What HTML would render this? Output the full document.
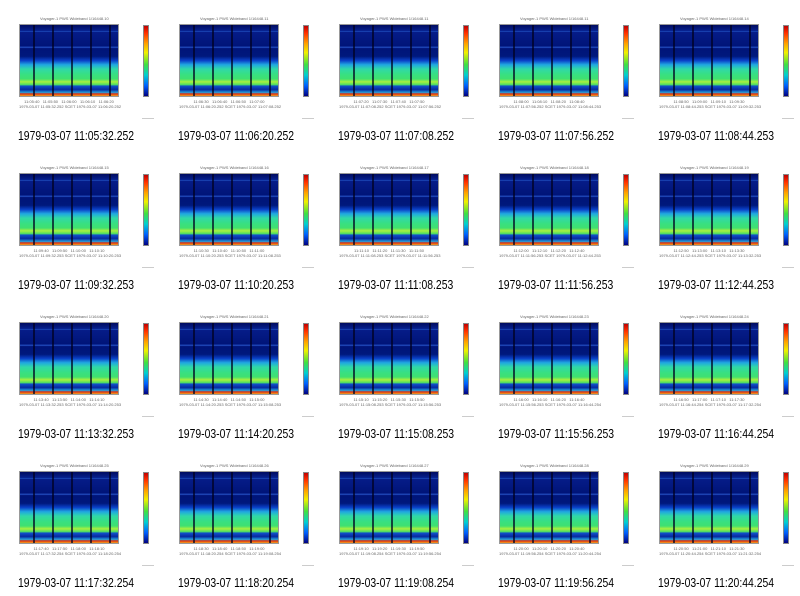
<!DOCTYPE html>
<html><head><meta charset="utf-8"><style>
*{margin:0;padding:0;box-sizing:border-box}
body{width:800px;height:596px;background:#fff;position:relative;overflow:hidden;font-family:"Liberation Sans",sans-serif}
.c{position:absolute;width:160px;height:149px}
.t{position:absolute;left:40px;top:16px;font-size:4px;color:#666;white-space:nowrap}
.p{position:absolute;left:19px;top:24px;width:100px;height:73px;border:1px solid #999;
background:
repeating-linear-gradient(90deg,transparent 0 13px,rgba(0,0,30,.7) 13px 15px,transparent 15px 19px),
linear-gradient(180deg,#000c60 0%,#06208e 8%,#2050c0 9%,#061c88 10%,#001478 30%,#2a5ad0 31%,#001478 33%,#00187c 44%,#0a40c8 50%,#20a8e0 56%,#30d8a8 62%,#38e080 70%,#40e070 76%,#a8f040 80%,#50e060 84%,#1050c8 86%,#0828a0 91%,#20a0e0 95%,#e03010 97%,#f0a020 100%)}
.cb{position:absolute;left:143px;top:25px;width:6px;height:72px;border:1px solid #888;background:linear-gradient(180deg,#c00000,#ff3000 10%,#ffa000 25%,#f0f000 38%,#40e040 55%,#00d0d0 70%,#0060ff 85%,#000080)}
.x1,.x2{position:absolute;left:19px;font-size:4px;color:#666;white-space:nowrap;width:100px;text-align:center}
.x1{top:99px}.x2{top:104px}
.cp{position:absolute;left:18px;top:128px;font-size:13px;color:#000;white-space:nowrap;transform:scaleX(.8);transform-origin:left top}
.r{position:absolute;left:142px;top:118px;width:12px;height:1px;background:#ccc}
</style></head><body>
<div class="c" style="left:0;top:0"><div class="t">Voyager-1 PWS Wideband 1/16448.10</div><div class="p"></div><div class="cb"></div><div class="x1">11:05:40 &nbsp; 11:05:50 &nbsp; 11:06:00 &nbsp; 11:06:10 &nbsp; 11:06:20</div><div class="x2">1979-03-07 11:05:32.252 SCET 1979-03-07 11:06:20.252</div><div class="r"></div><div class="cp">1979-03-07 11:05:32.252</div></div>
<div class="c" style="left:160px;top:0"><div class="t">Voyager-1 PWS Wideband 1/16448.11</div><div class="p"></div><div class="cb"></div><div class="x1">11:06:30 &nbsp; 11:06:40 &nbsp; 11:06:50 &nbsp; 11:07:00</div><div class="x2">1979-03-07 11:06:20.252 SCET 1979-03-07 11:07:08.252</div><div class="r"></div><div class="cp">1979-03-07 11:06:20.252</div></div>
<div class="c" style="left:320px;top:0"><div class="t">Voyager-1 PWS Wideband 1/16448.11</div><div class="p"></div><div class="cb"></div><div class="x1">11:07:20 &nbsp; 11:07:30 &nbsp; 11:07:40 &nbsp; 11:07:50</div><div class="x2">1979-03-07 11:07:08.252 SCET 1979-03-07 11:07:56.252</div><div class="r"></div><div class="cp">1979-03-07 11:07:08.252</div></div>
<div class="c" style="left:480px;top:0"><div class="t">Voyager-1 PWS Wideband 1/16448.11</div><div class="p"></div><div class="cb"></div><div class="x1">11:08:00 &nbsp; 11:08:10 &nbsp; 11:08:20 &nbsp; 11:08:40</div><div class="x2">1979-03-07 11:07:56.252 SCET 1979-03-07 11:08:44.253</div><div class="r"></div><div class="cp">1979-03-07 11:07:56.252</div></div>
<div class="c" style="left:640px;top:0"><div class="t">Voyager-1 PWS Wideband 1/16448.14</div><div class="p"></div><div class="cb"></div><div class="x1">11:08:50 &nbsp; 11:09:00 &nbsp; 11:09:10 &nbsp; 11:09:30</div><div class="x2">1979-03-07 11:08:44.253 SCET 1979-03-07 11:09:32.253</div><div class="r"></div><div class="cp">1979-03-07 11:08:44.253</div></div>

<div class="c" style="left:0;top:149px"><div class="t">Voyager-1 PWS Wideband 1/16448.15</div><div class="p"></div><div class="cb"></div><div class="x1">11:09:40 &nbsp; 11:09:50 &nbsp; 11:10:00 &nbsp; 11:10:10</div><div class="x2">1979-03-07 11:09:32.253 SCET 1979-03-07 11:10:20.253</div><div class="r"></div><div class="cp">1979-03-07 11:09:32.253</div></div>
<div class="c" style="left:160px;top:149px"><div class="t">Voyager-1 PWS Wideband 1/16448.16</div><div class="p"></div><div class="cb"></div><div class="x1">11:10:30 &nbsp; 11:10:40 &nbsp; 11:10:50 &nbsp; 11:11:00</div><div class="x2">1979-03-07 11:10:20.253 SCET 1979-03-07 11:11:08.253</div><div class="r"></div><div class="cp">1979-03-07 11:10:20.253</div></div>
<div class="c" style="left:320px;top:149px"><div class="t">Voyager-1 PWS Wideband 1/16448.17</div><div class="p"></div><div class="cb"></div><div class="x1">11:11:10 &nbsp; 11:11:20 &nbsp; 11:11:30 &nbsp; 11:11:50</div><div class="x2">1979-03-07 11:11:08.253 SCET 1979-03-07 11:11:56.253</div><div class="r"></div><div class="cp">1979-03-07 11:11:08.253</div></div>
<div class="c" style="left:480px;top:149px"><div class="t">Voyager-1 PWS Wideband 1/16448.18</div><div class="p"></div><div class="cb"></div><div class="x1">11:12:00 &nbsp; 11:12:10 &nbsp; 11:12:20 &nbsp; 11:12:40</div><div class="x2">1979-03-07 11:11:56.253 SCET 1979-03-07 11:12:44.253</div><div class="r"></div><div class="cp">1979-03-07 11:11:56.253</div></div>
<div class="c" style="left:640px;top:149px"><div class="t">Voyager-1 PWS Wideband 1/16448.19</div><div class="p"></div><div class="cb"></div><div class="x1">11:12:50 &nbsp; 11:13:00 &nbsp; 11:13:10 &nbsp; 11:13:30</div><div class="x2">1979-03-07 11:12:44.253 SCET 1979-03-07 11:13:32.253</div><div class="r"></div><div class="cp">1979-03-07 11:12:44.253</div></div>

<div class="c" style="left:0;top:298px"><div class="t">Voyager-1 PWS Wideband 1/16448.20</div><div class="p"></div><div class="cb"></div><div class="x1">11:13:40 &nbsp; 11:13:50 &nbsp; 11:14:00 &nbsp; 11:14:10</div><div class="x2">1979-03-07 11:13:32.253 SCET 1979-03-07 11:14:20.253</div><div class="r"></div><div class="cp">1979-03-07 11:13:32.253</div></div>
<div class="c" style="left:160px;top:298px"><div class="t">Voyager-1 PWS Wideband 1/16448.21</div><div class="p"></div><div class="cb"></div><div class="x1">11:14:30 &nbsp; 11:14:40 &nbsp; 11:14:50 &nbsp; 11:15:00</div><div class="x2">1979-03-07 11:14:20.253 SCET 1979-03-07 11:15:08.253</div><div class="r"></div><div class="cp">1979-03-07 11:14:20.253</div></div>
<div class="c" style="left:320px;top:298px"><div class="t">Voyager-1 PWS Wideband 1/16448.22</div><div class="p"></div><div class="cb"></div><div class="x1">11:15:10 &nbsp; 11:15:20 &nbsp; 11:15:30 &nbsp; 11:15:50</div><div class="x2">1979-03-07 11:15:08.253 SCET 1979-03-07 11:15:56.253</div><div class="r"></div><div class="cp">1979-03-07 11:15:08.253</div></div>
<div class="c" style="left:480px;top:298px"><div class="t">Voyager-1 PWS Wideband 1/16448.23</div><div class="p"></div><div class="cb"></div><div class="x1">11:16:00 &nbsp; 11:16:10 &nbsp; 11:16:20 &nbsp; 11:16:40</div><div class="x2">1979-03-07 11:15:56.253 SCET 1979-03-07 11:16:44.254</div><div class="r"></div><div class="cp">1979-03-07 11:15:56.253</div></div>
<div class="c" style="left:640px;top:298px"><div class="t">Voyager-1 PWS Wideband 1/16448.24</div><div class="p"></div><div class="cb"></div><div class="x1">11:16:50 &nbsp; 11:17:00 &nbsp; 11:17:10 &nbsp; 11:17:30</div><div class="x2">1979-03-07 11:16:44.254 SCET 1979-03-07 11:17:32.254</div><div class="r"></div><div class="cp">1979-03-07 11:16:44.254</div></div>

<div class="c" style="left:0;top:447px"><div class="t">Voyager-1 PWS Wideband 1/16448.25</div><div class="p"></div><div class="cb"></div><div class="x1">11:17:40 &nbsp; 11:17:50 &nbsp; 11:18:00 &nbsp; 11:18:10</div><div class="x2">1979-03-07 11:17:32.254 SCET 1979-03-07 11:18:20.254</div><div class="r"></div><div class="cp">1979-03-07 11:17:32.254</div></div>
<div class="c" style="left:160px;top:447px"><div class="t">Voyager-1 PWS Wideband 1/16448.26</div><div class="p"></div><div class="cb"></div><div class="x1">11:18:30 &nbsp; 11:18:40 &nbsp; 11:18:50 &nbsp; 11:19:00</div><div class="x2">1979-03-07 11:18:20.254 SCET 1979-03-07 11:19:08.254</div><div class="r"></div><div class="cp">1979-03-07 11:18:20.254</div></div>
<div class="c" style="left:320px;top:447px"><div class="t">Voyager-1 PWS Wideband 1/16448.27</div><div class="p"></div><div class="cb"></div><div class="x1">11:19:10 &nbsp; 11:19:20 &nbsp; 11:19:30 &nbsp; 11:19:50</div><div class="x2">1979-03-07 11:19:08.254 SCET 1979-03-07 11:19:56.254</div><div class="r"></div><div class="cp">1979-03-07 11:19:08.254</div></div>
<div class="c" style="left:480px;top:447px"><div class="t">Voyager-1 PWS Wideband 1/16448.28</div><div class="p"></div><div class="cb"></div><div class="x1">11:20:00 &nbsp; 11:20:10 &nbsp; 11:20:20 &nbsp; 11:20:40</div><div class="x2">1979-03-07 11:19:56.254 SCET 1979-03-07 11:20:44.254</div><div class="r"></div><div class="cp">1979-03-07 11:19:56.254</div></div>
<div class="c" style="left:640px;top:447px"><div class="t">Voyager-1 PWS Wideband 1/16448.29</div><div class="p"></div><div class="cb"></div><div class="x1">11:20:50 &nbsp; 11:21:00 &nbsp; 11:21:10 &nbsp; 11:21:30</div><div class="x2">1979-03-07 11:20:44.254 SCET 1979-03-07 11:21:32.254</div><div class="r"></div><div class="cp">1979-03-07 11:20:44.254</div></div>
</body></html>
